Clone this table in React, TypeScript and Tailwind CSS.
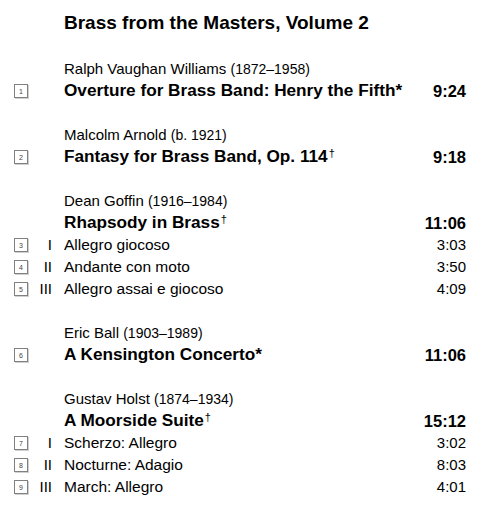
import React from "react";

type Track = { n: number; mv?: string; title: string; time: string };
type Work = {
  composer: string;
  dates: string;
  title: string;
  mark?: string;
  time: string;
  n?: number;
  tracks?: Track[];
};

const works: Work[] = [
  { composer: "Ralph Vaughan Williams", dates: "(1872–1958)", title: "Overture for Brass Band: Henry the Fifth", mark: "*", time: "9:24", n: 1 },
  { composer: "Malcolm Arnold", dates: "(b. 1921)", title: "Fantasy for Brass Band, Op. 114", mark: "†", time: "9:18", n: 2 },
  {
    composer: "Dean Goffin",
    dates: "(1916–1984)",
    title: "Rhapsody in Brass",
    mark: "†",
    time: "11:06",
    tracks: [
      { n: 3, mv: "I", title: "Allegro giocoso", time: "3:03" },
      { n: 4, mv: "II", title: "Andante con moto", time: "3:50" },
      { n: 5, mv: "III", title: "Allegro assai e giocoso", time: "4:09" },
    ],
  },
  { composer: "Eric Ball", dates: "(1903–1989)", title: "A Kensington Concerto", mark: "*", time: "11:06", n: 6 },
  {
    composer: "Gustav Holst",
    dates: "(1874–1934)",
    title: "A Moorside Suite",
    mark: "†",
    time: "15:12",
    tracks: [
      { n: 7, mv: "I", title: "Scherzo: Allegro", time: "3:02" },
      { n: 8, mv: "II", title: "Nocturne: Adagio", time: "8:03" },
      { n: 9, mv: "III", title: "March: Allegro", time: "4:01" },
    ],
  },
];

// little numbered square in front of each track
const TrackBox = ({ n }: { n?: number }) =>
  n ? (
    <span className="flex h-[14px] w-[14px] shrink-0 items-center justify-center border border-[#808080] bg-white text-[7px] leading-none text-[#444] shadow-[1px_1px_0_#d0d0d0]">
      {n}
    </span>
  ) : (
    <span className="w-[14px] shrink-0" />
  );

function Row({ n, mv, children, time, bold }: { n?: number; mv?: string; children: React.ReactNode; time?: string; bold?: boolean }) {
  return (
    <div className="flex h-[22px] items-center whitespace-nowrap">
      <TrackBox n={n} />
      <span className="w-[24px] shrink-0 text-right text-[15px]">{mv}</span>
      <span className={`ml-[12px] flex-1 ${bold ? "text-[17.2px] font-bold" : "text-[15.5px]"}`}>{children}</span>
      <span className={bold ? "text-[16.5px] font-bold" : "text-[15px]"}>{time}</span>
    </div>
  );
}

export default function App() {
  return (
    <div className="h-[513px] w-[487px] bg-white pl-[14px] pr-[21px] pt-[11px] text-black" style={{ fontFamily: '"Liberation Sans", Arial, sans-serif' }}>
      <h1 className="ml-[50px] h-[24px] text-[19px] font-bold leading-[24px]">Brass from the Masters, Volume 2</h1>
      {works.map((w, i) => (
        <div key={i} className={i === 0 ? "mt-[23px]" : "mt-[22px]"}>
          <Row>
            <span className="text-[15px]">
              {w.composer} <span className="text-[14px]">{w.dates}</span>
            </span>
          </Row>
          <Row n={w.n} time={w.time} bold>
            {w.title}
            {w.mark === "†" ? <sup className="ml-[1px] text-[11px] font-normal">†</sup> : w.mark}
          </Row>
          {w.tracks?.map((t) => (
            <Row key={t.n} n={t.n} mv={t.mv} time={t.time}>
              {t.title}
            </Row>
          ))}
        </div>
      ))}
    </div>
  );
}
